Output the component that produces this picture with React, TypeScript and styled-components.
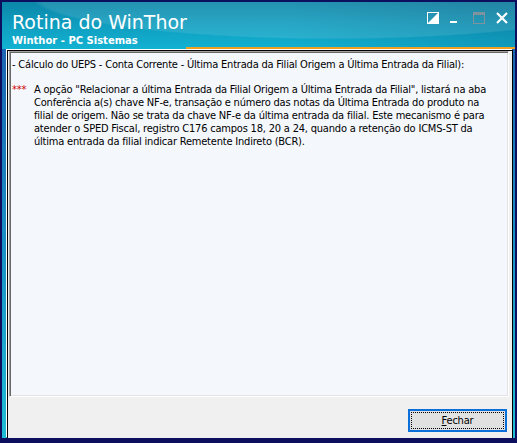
import React from 'react'
import styled, { createGlobalStyle } from 'styled-components'

const GlobalStyle = createGlobalStyle`
  html, body {
    margin: 0;
    padding: 0;
    background: #ffffff;
  }
`

const navy = '#0b0f5e'

const Frame = styled.div`
  width: 517px;
  height: 443px;
  box-sizing: border-box;
  border: 2px solid ${navy};
  border-bottom-width: 5px;
  display: flex;
  flex-direction: column;
  background: linear-gradient(180deg, #1d5aae 0%, #1a86c0 45%, #1fbcd6 100%);
`

const TitleBar = styled.div`
  height: 47px;
  flex: none;
  display: flex;
  flex-direction: column;
  background:
    radial-gradient(ellipse 420px 60px at 330px -6px, rgba(255, 255, 255, 0.1) 0%, rgba(255, 255, 255, 0.1) 70%, rgba(255, 255, 255, 0) 72%),
    linear-gradient(90deg, rgba(0, 20, 60, 0) 55%, rgba(0, 20, 60, 0.14) 100%),
    linear-gradient(180deg, #0b86a8 0%, #0f9cbe 45%, #12b2d2 100%);
`

const Header = styled.div`
  flex: 1;
  display: flex;
  justify-content: space-between;
  align-items: flex-start;
`

const Titles = styled.div`
  padding: 9px 0 0 10px;
  color: #ffffff;
`

const Title = styled.div`
  font-family: 'DejaVu Sans', Verdana, sans-serif;
  font-size: 19px;
  line-height: 22px;
`

const Subtitle = styled.div`
  margin-top: 2px;
  font-family: 'DejaVu Sans', Verdana, sans-serif;
  font-weight: bold;
  font-size: 10px;
  line-height: 12px;
`

const Controls = styled.div`
  display: flex;
  gap: 11px;
  padding: 10px 7px 0 0;
`

const ControlIcon = styled.svg`
  width: 12px;
  height: 12px;
  display: block;
`

const Accent = styled.div`
  height: 2px;
  flex: none;
  margin-left: 184px;
  background: #f0a020;
`

const Body = styled.div`
  flex: 1;
  margin: 1px 2px 0 5px;
  border: 1px solid #000000;
  border-bottom: none;
  box-shadow: -1px -1px 0 #ffffff;
  background: #f0f0f0;
  display: flex;
  flex-direction: column;
  min-height: 0;
`

const Memo = styled.div`
  flex: 1;
  margin: 0 3px 0 1px;
  border-style: solid;
  border-width: 1px;
  border-color: #a0a0a0 #ffffff #ffffff #a0a0a0;
  box-shadow: inset 1px 1px 0 #696969, inset -1px -1px 0 #e3e3e3;
  background: #f4f7fc;
  padding: 6px 4px 0 2px;
  font-family: 'DejaVu Sans Condensed', 'DejaVu Sans', sans-serif;
  font-stretch: condensed;
  font-size: 11px;
  letter-spacing: -0.2px;
  line-height: 13px;
  color: #000000;
  white-space: nowrap;
  overflow: hidden;
`

const Line = styled.div`
  margin-bottom: 12px;
`

const Note = styled.div`
  padding-left: 22px;
  text-indent: -22px;
`

const Marker = styled.span`
  display: inline-block;
  width: 22px;
  text-indent: 0;
  color: #d00000;
`

const Footer = styled.div`
  flex: none;
  display: flex;
  justify-content: flex-end;
  padding: 12px 5px 6px 0;
`

const Button = styled.button`
  width: 99px;
  height: 23px;
  box-sizing: border-box;
  border: 2px solid #0a6fd8;
  background: #e1e1e1;
  padding: 0;
  position: relative;
  font-family: 'DejaVu Sans Condensed', 'DejaVu Sans', sans-serif;
  font-stretch: condensed;
  font-size: 11px;
  letter-spacing: -0.2px;
  color: #000000;

  &::after {
    content: '';
    position: absolute;
    inset: 1px;
    border: 1px dotted #000000;
  }

  u {
    text-decoration: underline;
  }
`

const WindowControls = () => (
  <Controls>
    <ControlIcon viewBox="0 0 12 12">
      <rect x="0.5" y="0.5" width="11" height="11" fill="none" stroke="#ffffff" />
      <polygon points="11.5,0.5 11.5,11.5 0.5,11.5" fill="#ffffff" />
    </ControlIcon>
    <ControlIcon viewBox="0 0 12 12">
      <rect x="0" y="9" width="7" height="2" fill="#ffffff" />
    </ControlIcon>
    <ControlIcon viewBox="0 0 12 12">
      <rect x="0.5" y="0.5" width="11" height="11" fill="none" stroke="#7f939c" />
      <rect x="0" y="0" width="12" height="3" fill="#7f939c" />
    </ControlIcon>
    <ControlIcon viewBox="0 0 12 12">
      <path d="M1 1 L11 11 M11 1 L1 11" stroke="#ffffff" strokeWidth="2.2" />
    </ControlIcon>
  </Controls>
)

export default function App() {
  return (
    <>
      <GlobalStyle />
      <Frame>
        <TitleBar>
          <Header>
            <Titles>
              <Title>Rotina do WinThor</Title>
              <Subtitle>Winthor - PC Sistemas</Subtitle>
            </Titles>
            <WindowControls />
          </Header>
          <Accent />
        </TitleBar>
        <Body>
          <Memo>
            <Line>
              - Cálculo do UEPS - Conta Corrente - Última Entrada da Filial Origem a Última Entrada da Filial):
            </Line>
            <Note>
              <Marker>***</Marker>A opção "Relacionar a última Entrada da Filial Origem a Última Entrada da Filial", listará na aba
              <br />
              Conferência a(s) chave NF-e, transação e número das notas da Última Entrada do produto na
              <br />
              filial de origem. Não se trata da chave NF-e da última entrada da filial. Este mecanismo é para
              <br />
              atender o SPED Fiscal, registro C176 campos 18, 20 a 24, quando a retenção do ICMS-ST da
              <br />
              última entrada da filial indicar Remetente Indireto (BCR).
            </Note>
          </Memo>
          <Footer>
            <Button>
              <u>F</u>echar
            </Button>
          </Footer>
        </Body>
      </Frame>
    </>
  )
}
